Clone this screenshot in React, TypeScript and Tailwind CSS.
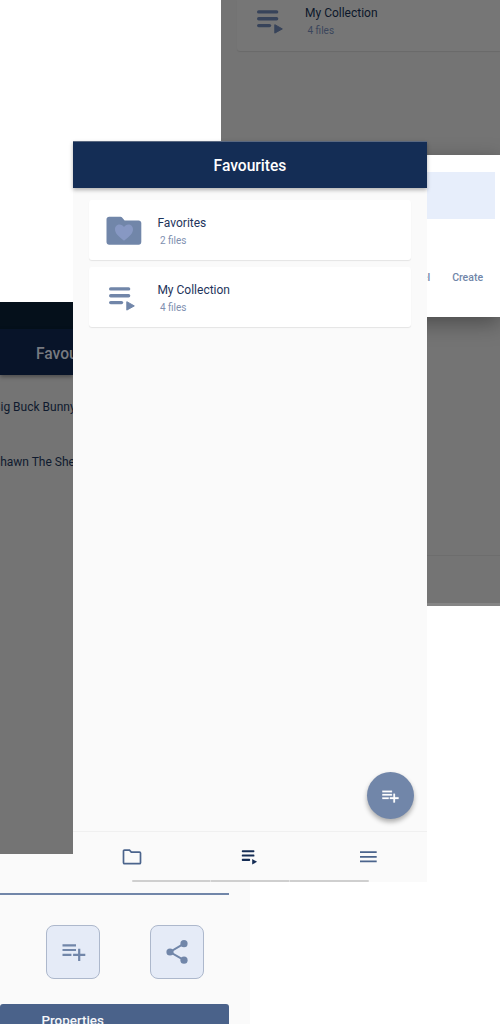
import React from "react";

type IconProps = { className?: string };

function CollectionIcon({ className = "" }: IconProps) {
  return (
    <svg className={className} width="28" height="26" viewBox="0 0 28 26" fill="currentColor">
      <rect x="1" y="1.2" width="21.3" height="3.4" rx="1.7" />
      <rect x="1" y="8" width="21.3" height="3.4" rx="1.7" />
      <rect x="1" y="14.9" width="14.2" height="3.4" rx="1.7" />
      <path d="M18.8 15.7v8.400l7.500-4.200z" stroke="currentColor" strokeWidth="1" strokeLinejoin="round" />
    </svg>
  );
}

function FolderHeartIcon() {
  return (
    <svg className="mt-px ml-px" width="36" height="30" viewBox="0 0 36 30">
      <path
        d="M3.200.8h11.200c.8 0 1.400.3 1.900 1l2.300 2.600h14c1.500 0 2.700 1 2.700 2.500v18.800c0 1.800-1 3-2.700 3H3.200C1.600 28.700.5 27.500.5 25.900V3.500C.5 1.900 1.600.8 3.200.8z"
        fill="#7186a9"
      />
      <path
        d="M18 24.700C12 20 9 17.300 9 13.300 9 10.500 11.100 8.500 13.600 8.500c1.700 0 3.300.9 4.400 2.400 1.100-1.500 2.700-2.400 4.400-2.400 2.500 0 4.600 2 4.600 4.800 0 4-3 6.700-9 11.400z"
        fill="#8798c3"
      />
    </svg>
  );
}

function PlaylistAddIcon({ className = "" }: IconProps) {
  return (
    <svg className={className} viewBox="0 0 24 17" fill="currentColor">
      <path d="M.5.3h13.500v2.100H.5zM.5 5h13.500v2.100H.5zM.5 9.800h8.900v2.100H.5zM16.100 4.700h2.200v5h5v2.200h-5v5h-2.200v-5h-5V9.700h5z" />
    </svg>
  );
}

function ShareIcon() {
  return (
    <svg width="22" height="26" viewBox="0 0 22 26" fill="#7186a9">
      <path d="M18 4.700 4 13l14 8.200" fill="none" stroke="#7186a9" strokeWidth="2" />
      <circle cx="4" cy="13" r="3.600" />
      <circle cx="18" cy="4.700" r="3.600" />
      <circle cx="18" cy="21.200" r="3.600" />
    </svg>
  );
}

function FolderIcon() {
  return (
    <svg width="20" height="16" viewBox="0 0 20 16" fill="none" stroke="#4b648c" strokeWidth="1.700">
      <path d="M2.500 1.200H7.500l1.800 1.900h8.200c.6 0 1 .4 1 1v9.600c0 .6-.4 1-1 1H2.500c-.6 0-1-.4-1-1V2.200c0-.6.4-1 1-1z" />
    </svg>
  );
}

function QueueIcon() {
  return (
    <svg className="-ml-[2px]" width="17" height="16" viewBox="0 0 17 16" fill="#142c54">
      <rect x=".8" y="1.200" width="12.600" height="2.100" rx=".7" />
      <rect x=".8" y="5.500" width="12.600" height="2.100" rx=".7" />
      <rect x=".8" y="9.800" width="8.300" height="2.100" rx=".7" />
      <path d="M11.200 10v5.600l4.900-2.800z" />
    </svg>
  );
}

function MenuIcon() {
  return (
    <svg width="17" height="14" viewBox="0 0 17 14" fill="#4b648c">
      <path d="M0 1.200h16.700V3H0zM0 5.900h16.700v1.800H0zM0 10.400h16.700v1.800H0z" />
    </svg>
  );
}

function FileCard({ icon, title, count }: { icon: React.ReactNode; title: string; count: string }) {
  return (
    <div className="flex h-[60px] items-center rounded-[3px] bg-white shadow-[0_1px_1px_rgba(0,0,0,0.09)]">
      <div className="flex w-[68px] items-center justify-center">{icon}</div>
      <div className="pt-[3px] pl-[0.400px]">
        <div className="text-[12px] leading-[18px] text-[#1e345b]">{title}</div>
        <div className="pl-[2.500px] text-[10px] leading-[18px] text-[#8090b0]">{count}</div>
      </div>
    </div>
  );
}

function DialogScreen() {
  return (
    <section className="absolute top-0 left-[221px] flex h-[606px] w-[279px] flex-col bg-[#747474]">
      <div className="ml-4 flex h-[51px] rounded-bl-[3px] bg-[#767676] shadow-[0_1px_1px_rgba(0,0,0,0.09)]">
        <CollectionIcon className="mt-[9px] ml-[19px] text-[#37435a]" />
        <div className="ml-[21px] pt-[5px]">
          <div className="text-[12px] leading-[17px] text-[#0c172a]">My Collection</div>
          <div className="pl-[2.500px] text-[10px] leading-[18px] text-[#3b465c]">4 files</div>
        </div>
      </div>
      <div className="mt-[104px] flex h-[162px] flex-col items-end bg-white pt-[17px] shadow-[0_6px_20px_rgba(0,0,0,0.35)]">
        <div className="mr-[5px] h-[46.500px] w-[260px] bg-[#e7eefb]" />
        <div className="mt-[50.500px] mr-[17px] flex gap-[22px] text-[10.500px] leading-[18px] font-medium text-[#7186a9]">
          <span>Cancel</span>
          <span>Create</span>
        </div>
      </div>
      <div className="mt-[238px] h-[48px] border-t border-[#6d6d6d]" />
      <div className="h-[3px] bg-[#858585]" />
    </section>
  );
}

function FilesScreen() {
  return (
    <section className="absolute top-[302px] left-0 h-[552px] w-[73px] overflow-hidden bg-[#747474]">
      <div className="h-[27px] bg-[#05101b]" />
      <div className="flex h-[46px] items-center bg-[#081429] pt-[5px] pl-9 text-[15.600px] font-medium text-[#777a80] shadow-[0_2px_4px_rgba(0,0,0,0.35)]">
        Favourites
      </div>
      <div className="flex flex-col gap-[37px] pt-[22.500px] text-[12px] leading-[18px] whitespace-nowrap text-[#0f1a2e]">
        <span className="-ml-[7px]">Big Buck Bunny</span>
        <span className="-ml-[7px]">Shawn The Sheep</span>
      </div>
    </section>
  );
}

function ActionButton({ children }: { children: React.ReactNode }) {
  return (
    <button className="flex h-[54px] w-[54px] items-center justify-center rounded-[8px] border border-[#adb8cc] bg-[#e5ebf7] text-[#7186a9]">
      {children}
    </button>
  );
}

function DetailsScreen() {
  return (
    <section className="absolute top-[854px] left-0 h-[170px] w-[250px] overflow-hidden bg-[#fafafa]">
      <div className="mt-[39px] h-[1.500px] w-[229px] bg-[#7186a9]" />
      <div className="mt-[30.500px] flex gap-[50px] pl-[46px]">
        <ActionButton>
          <PlaylistAddIcon className="mt-px ml-[2px] h-[17px] w-6" />
        </ActionButton>
        <ActionButton>
          <ShareIcon />
        </ActionButton>
      </div>
      <div className="mt-[24.500px] h-[48px] w-[229px] rounded-[3px] bg-[#4a628a] pt-[8px] pl-[41.500px] text-[13.400px] leading-[18px] font-medium text-[#f5f7fa]">
        Properties
      </div>
    </section>
  );
}

function FavouritesScreen() {
  return (
    <main className="absolute top-[141px] left-[73px] flex h-[741px] w-[354px] flex-col bg-[#fafafa]">
      <header className="flex h-[47px] shrink-0 items-center justify-center border-t border-[#5a6880] bg-[#142d55] pt-[4px] text-[15.600px] font-medium text-white shadow-[0_2px_4px_rgba(0,0,0,0.3)]">
        Favourites
      </header>
      <div className="flex flex-1 flex-col gap-[7px] px-4 pt-3">
        <FileCard icon={<FolderHeartIcon />} title="Favorites" count="2 files" />
        <FileCard
          icon={<CollectionIcon className="mt-[3px] -ml-[2px] text-[#7186a9]" />}
          title="My Collection"
          count="4 files"
        />
      </div>
      <button className="mr-[13.500px] mb-[12px] flex h-[47px] w-[47px] shrink-0 items-center justify-center self-end rounded-full bg-[#7186a9] text-white shadow-[0_3px_5px_rgba(0,0,0,0.32)]">
        <PlaylistAddIcon className="mt-[2px] ml-px h-[13px] w-[17px] stroke-white [stroke-width:0.4]" />
      </button>
      <nav className="flex h-[51px] shrink-0 flex-col border-t border-[#f0f0f0]">
        <div className="flex h-[48px] items-center pt-px">
          <div className="flex flex-1 justify-center">
            <FolderIcon />
          </div>
          <div className="flex flex-1 justify-center">
            <QueueIcon />
          </div>
          <div className="flex flex-1 justify-center">
            <MenuIcon />
          </div>
        </div>
        <div className="ml-[58.500px] flex h-[2px] w-[237px] shrink-0 divide-x divide-[#e2e2e2] overflow-hidden rounded-full bg-[#cfcfcf]">
          <div className="flex-1" />
          <div className="flex-1" />
          <div className="flex-1" />
        </div>
      </nav>
    </main>
  );
}

export default function App() {
  return (
    <div className="relative h-[1024px] w-[500px] overflow-hidden bg-white font-['Roboto',sans-serif]">
      <DialogScreen />
      <FilesScreen />
      <DetailsScreen />
      <FavouritesScreen />
    </div>
  );
}
